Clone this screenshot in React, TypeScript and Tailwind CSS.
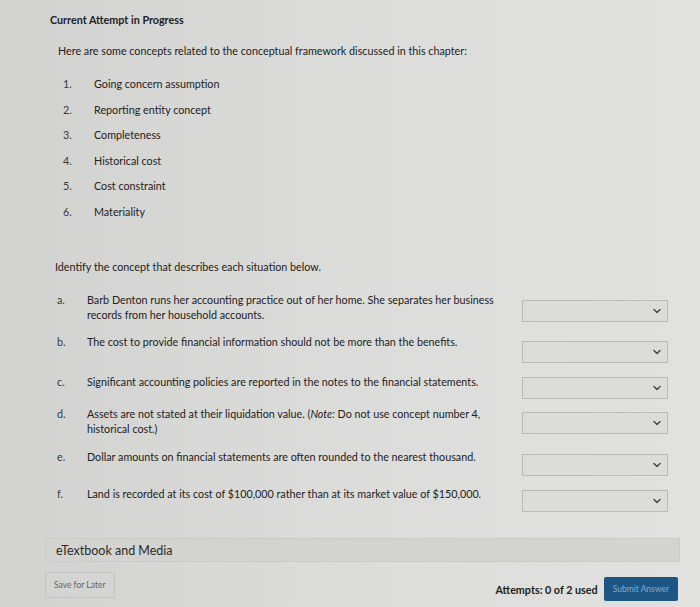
import { ChevronDown } from "lucide-react";

const concepts = [
  "Going concern assumption",
  "Reporting entity concept",
  "Completeness",
  "Historical cost",
  "Cost constraint",
  "Materiality",
];

type Situation = {
  label: string;
  text: React.ReactNode;
  rowMt: string;
  selMt: string;
};

const situations: Situation[] = [
  {
    label: "a.",
    text: (
      <>
        Barb Denton runs her accounting practice out of her home. She separates her business
        <br />
        records from her household accounts.
      </>
    ),
    rowMt: "mt-[18px]",
    selMt: "mt-[8px]",
  },
  {
    label: "b.",
    text: "The cost to provide financial information should not be more than the benefits.",
    rowMt: "mt-[12px]",
    selMt: "mt-[7px]",
  },
  {
    label: "c.",
    text: "Significant accounting policies are reported in the notes to the financial statements.",
    rowMt: "mt-[11px]",
    selMt: "mt-[3px]",
  },
  {
    label: "d.",
    text: (
      <>
        Assets are not stated at their liquidation value. (<i>Note:</i> Do not use concept number 4,
        <br />
        historical cost.)
      </>
    ),
    rowMt: "mt-[7px]",
    selMt: "mt-[6px]",
  },
  {
    label: "e.",
    text: "Dollar amounts on financial statements are often rounded to the nearest thousand.",
    rowMt: "mt-[13px]",
    selMt: "mt-[5px]",
  },
  {
    label: "f.",
    text: "Land is recorded at its cost of $100,000 rather than at its market value of $150,000.",
    rowMt: "mt-[10px]",
    selMt: "mt-[4px]",
  },
];

function Select({ className }: { className?: string }) {
  return (
    <div
      className={`ml-auto mr-[32px] flex h-[22px] w-[146px] shrink-0 items-center justify-end border border-[#b9b9b6] bg-[#dcdcda] pr-[4px] ${className ?? ""}`}
    >
      <ChevronDown className="h-[12px] w-[12px] text-[#4a4a4a]" strokeWidth={3} />
    </div>
  );
}

export default function App() {
  return (
    <div
      className="h-[607px] w-[700px] overflow-hidden bg-gradient-to-r from-[#d2d2d0] via-[#dcdcda] to-[#e1e1df] text-[10.75px] leading-[15px] text-[#222]"
      style={{ fontFamily: "Lato, 'Liberation Sans', sans-serif" }}
    >
      <div className="pl-[50px] pt-[12px] font-bold">Current Attempt in Progress</div>

      <div className="ml-[35px] mt-[5px] pb-[10px] pt-[11px]">
        <p className="pl-[23px]">
          Here are some concepts related to the conceptual framework discussed in this chapter:
        </p>
        <ol className="mt-[13px] pl-[28px]">
          {concepts.map((c, i) => (
            <li key={c} className="flex h-[25.5px] items-center">
              <span className="w-[31px] text-[#3a3a3a]">{i + 1}.</span>
              <span>{c}</span>
            </li>
          ))}
        </ol>
      </div>

      <p className="mt-[25px] pl-[55px]">Identify the concept that describes each situation below.</p>

      <div>
        {situations.map((s) => (
          <div key={s.label} className={`flex items-start ${s.rowMt}`}>
            <span className="w-[87px] shrink-0 pl-[57px] text-[#3a3a3a]">{s.label}</span>
            <span className="w-[425px]">{s.text}</span>
            <Select className={s.selMt} />
          </div>
        ))}
      </div>

      <div className="mt-[26px] mr-[20px] ml-[45px] flex h-[24px] items-center border border-[#cacac7] bg-[#d3d3d0] pl-[10px] text-[12.5px] text-[#2a2a2a]">
        eTextbook and Media
      </div>

      <div className="ml-[45px] mr-[22px] mt-[10px] flex items-start">
        <button className="h-[26px] border border-[#c4c4c1] px-[8px] text-[8.5px] text-[#666]">
          Save for Later
        </button>
        <div className="ml-auto mt-[5px] flex items-center gap-[6px]">
          <span className="font-bold">Attempts: 0 of 2 used</span>
          <button className="h-[24px] rounded-[2px] bg-[#1b5684] px-[9px] text-[8.5px] text-[#86aac6]">
            Submit Answer
          </button>
        </div>
      </div>
    </div>
  );
}
